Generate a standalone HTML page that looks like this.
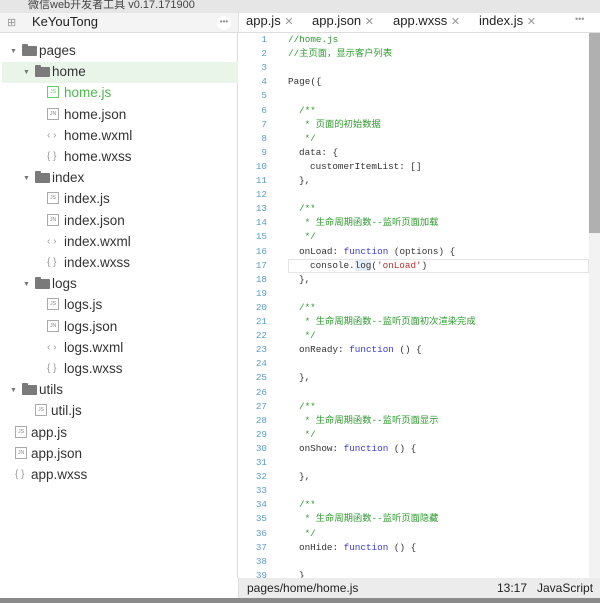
<!DOCTYPE html>
<html><head><meta charset="utf-8"><style>
*{margin:0;padding:0;box-sizing:border-box}
body{width:600px;height:603px;overflow:hidden;background:#fff;font-family:"Liberation Sans","Noto Sans CJK SC",sans-serif;position:relative}
.title{position:absolute;left:0;top:0;width:600px;height:13px;background:#e6e6e6;font-size:11px;color:#444;padding-left:28px;line-height:11px;overflow:hidden}
.hdr{position:absolute;top:13px;height:20px;background:#f4f4f4;border-bottom:1px solid #ddd}
.side{position:absolute;left:0;top:33px;width:238px;height:565px;border-right:1px solid #ddd;background:#fff}
.row{position:absolute;height:21px;line-height:21px;font-size:13.5px;color:#333;white-space:nowrap}
.arr{position:absolute;font-size:7px;color:#777;top:1px}
.fold{position:absolute;top:6px;width:15px;height:10px;background:#7a7a7a;border-radius:1px}
.fold:before{content:"";position:absolute;left:0;top:-2px;width:6px;height:3px;background:#7a7a7a;border-radius:1px 1px 0 0}
.fi{position:absolute;top:4px;width:12px;height:12px;border:1px solid #aaa;font-size:5px;line-height:10px;text-align:center;color:#888;font-family:"Liberation Sans"}
.br{position:absolute;font-size:10px;color:#999;top:0}
.code{position:absolute;left:239px;top:33px;width:361px;height:545px;overflow:hidden}
.ln{position:absolute;left:0;width:28px;height:14px;line-height:14px;text-align:right;font-family:"Liberation Mono",monospace;font-size:9.3px;color:#5b9ec4}
.cl{position:absolute;left:49px;height:14px;line-height:14px;font-family:"Liberation Mono","Noto Sans CJK SC",monospace;font-size:9.3px;color:#333;white-space:pre}
.c{color:#2e9a2e}.k{color:#3b3bd8}.s{color:#b33}
.status{position:absolute;left:239px;top:578px;width:361px;height:21px;background:#ececec;font-size:12px;line-height:20px;color:#222}
</style></head><body>
<div class="title">微信web开发者工具 v0.17.171900</div>
<div class="hdr" style="left:0;width:239px;border-right:1px solid #ddd">
<span style="position:absolute;left:7px;top:3px;font-size:11px;color:#999">⊞</span>
<span style="position:absolute;left:32px;top:1px;font-size:13px;color:#222">KeYouTong</span>
<span style="position:absolute;left:217px;top:3px;width:14px;height:14px;border-radius:7px;background:#fff;font-size:8px;color:#888;text-align:center;line-height:12px">•••</span>
</div>
<div class="hdr" style="left:239px;width:361px;background:#fff">
<span style="position:absolute;left:7px;top:0;font-size:13px;color:#222">app.js <span style="color:#999;font-size:11px">✕</span></span>
<span style="position:absolute;left:73px;top:0;font-size:13px;color:#222">app.json <span style="color:#999;font-size:11px">✕</span></span>
<span style="position:absolute;left:154px;top:0;font-size:13px;color:#222">app.wxss <span style="color:#999;font-size:11px">✕</span></span>
<span style="position:absolute;left:240px;top:0;font-size:13px;color:#222">index.js <span style="color:#999;font-size:11px">✕</span></span>
<span style="position:absolute;left:336px;top:1px;font-size:9px;color:#999">•••</span>
</div>
<div class="side"></div>
<div style="position:absolute;left:2px;top:62px;width:236px;height:21px;background:#eaf5ea"></div>
<div id="tree"></div>
<div class="code">
<div style="position:absolute;left:49px;top:226px;width:301px;height:14px;border:1px solid #e4e4e4"></div>
<div style="position:absolute;left:350px;top:0;width:11px;height:200px;background:#b0b0b0"></div>
<div style="position:absolute;left:350px;top:200px;width:11px;height:345px;background:#f2f2f2"></div>
<div id="code"></div>
</div>
<div class="status"><span style="position:absolute;left:8px">pages/home/home.js</span><span style="position:absolute;left:258px">13:17</span><span style="position:absolute;left:298px">JavaScript</span></div>
<div style="position:absolute;left:0;top:598px;width:600px;height:5px;background:#8a8a8a"></div>
<div style="position:absolute;left:0;top:578px;width:239px;height:20px;background:#fff;border-right:1px solid #ddd"></div>
<script>
var T=[
['f','pages',13,39],['f','home',26,52],['js','home.js',47,64,1],['jn','home.json',47,64],['x','home.wxml',47,64],['c','home.wxss',47,64],
['f','index',26,52],['js','index.js',47,64],['jn','index.json',47,64],['x','index.wxml',47,64],['c','index.wxss',47,64],
['f','logs',26,52],['js','logs.js',47,64],['jn','logs.json',47,64],['x','logs.wxml',47,64],['c','logs.wxss',47,64],
['f','utils',13,39],['js','util.js',35,51],['js','app.js',15,31],['jn','app.json',15,31],['c','app.wxss',15,31]];
var h='';T.forEach(function(r,i){var top=40+i*21.2;var g=r[4]?'#4cb94c':'#333';h+='<div class="row" style="left:0;top:'+top+'px;width:238px">';
if(r[0]=='f'){h+='<span class="arr" style="left:'+(r[2]-3)+'px">▼</span><span class="fold" style="left:'+(r[2]+9)+'px"></span>';}
else if(r[0]=='js'||r[0]=='jn'){h+='<span class="fi" style="left:'+r[2]+'px;'+(r[4]?'border-color:#6c6;color:#6c6':'')+'">'+(r[0]=='js'?'JS':'JN')+'</span>';}
else if(r[0]=='x'){h+='<span class="br" style="left:'+r[2]+'px">‹ ›</span>';}
else{h+='<span class="br" style="left:'+r[2]+'px">{ }</span>';}
h+='<span style="position:absolute;left:'+r[3]+'px;color:'+g+'">'+r[1]+'</span></div>';});
document.getElementById('tree').innerHTML=h;
var C=[
[0,'<span class="c">//home.js</span>'],[0,'<span class="c">//主页面，显示客户列表</span>'],[0,''],[0,'Page({'],[0,''],
[1,'<span class="c">/**</span>'],[1,'<span class="c"> * 页面的初始数据</span>'],[1,'<span class="c"> */</span>'],[1,'data: {'],[2,'customerItemList: []'],[1,'},'],[0,''],
[1,'<span class="c">/**</span>'],[1,'<span class="c"> * 生命周期函数--监听页面加载</span>'],[1,'<span class="c"> */</span>'],[1,'onLoad: <span class="k">function</span> (options) {'],[2,'console.<span style="background:#e4eef8">log</span>(<span class="s">\'onLoad\'</span>)'],[1,'},'],[0,''],
[1,'<span class="c">/**</span>'],[1,'<span class="c"> * 生命周期函数--监听页面初次渲染完成</span>'],[1,'<span class="c"> */</span>'],[1,'onReady: <span class="k">function</span> () {'],[0,''],[1,'},'],[0,''],
[1,'<span class="c">/**</span>'],[1,'<span class="c"> * 生命周期函数--监听页面显示</span>'],[1,'<span class="c"> */</span>'],[1,'onShow: <span class="k">function</span> () {'],[0,''],[1,'},'],[0,''],
[1,'<span class="c">/**</span>'],[1,'<span class="c"> * 生命周期函数--监听页面隐藏</span>'],[1,'<span class="c"> */</span>'],[1,'onHide: <span class="k">function</span> () {'],[0,''],[1,'}']];
var s='';C.forEach(function(r,i){var top=i*14.1;s+='<div class="ln" style="top:'+top+'px">'+(i+1)+'</div><div class="cl" style="top:'+top+'px;left:'+(49+r[0]*11)+'px">'+r[1]+'</div>';});
document.getElementById('code').innerHTML=s;
</script>
</body></html>
